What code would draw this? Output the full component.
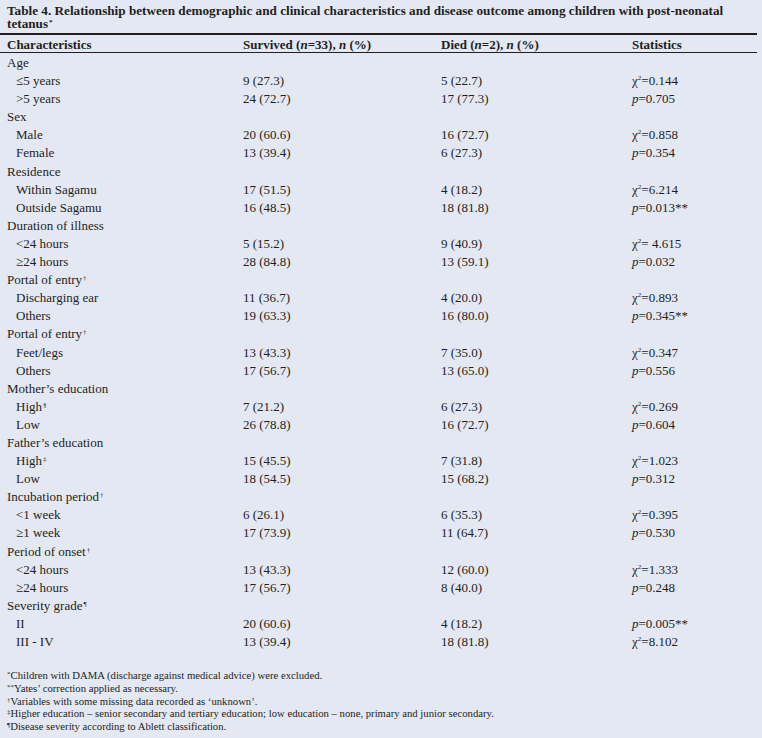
import React from "react";

type Row =
  | { kind: "head"; label: React.ReactNode }
  | { kind: "item"; label: React.ReactNode; s: string; d: string; stat: React.ReactNode };

const Chi = ({ v }: { v: string }) => (
  <span>
    χ<span className="text-[7px] leading-[0] relative -top-[5px]">2</span>={v}
  </span>
);
const P = ({ v }: { v: string }) => (
  <span>
    <i>p</i>={v}
  </span>
);
const M = ({ c }: { c: string }) => (
  <span className="text-[7px] leading-[0] relative -top-[4px] ml-[1px]">{c}</span>
);
const F = ({ c }: { c: string }) => (
  <span className="text-[7px] leading-[0] relative -top-[3px]">{c}</span>
);

const rows: Row[] = [
  { kind: "head", label: "Age" },
  { kind: "item", label: "≤5 years", s: "9 (27.3)", d: "5 (22.7)", stat: <Chi v="0.144" /> },
  { kind: "item", label: ">5 years", s: "24 (72.7)", d: "17 (77.3)", stat: <P v="0.705" /> },
  { kind: "head", label: "Sex" },
  { kind: "item", label: "Male", s: "20 (60.6)", d: "16 (72.7)", stat: <Chi v="0.858" /> },
  { kind: "item", label: "Female", s: "13 (39.4)", d: "6 (27.3)", stat: <P v="0.354" /> },
  { kind: "head", label: "Residence" },
  { kind: "item", label: "Within Sagamu", s: "17 (51.5)", d: "4 (18.2)", stat: <Chi v="6.214" /> },
  { kind: "item", label: "Outside Sagamu", s: "16 (48.5)", d: "18 (81.8)", stat: <P v="0.013**" /> },
  { kind: "head", label: "Duration of illness" },
  { kind: "item", label: "<24 hours", s: "5 (15.2)", d: "9 (40.9)", stat: <Chi v=" 4.615" /> },
  { kind: "item", label: "≥24 hours", s: "28 (84.8)", d: "13 (59.1)", stat: <P v="0.032" /> },
  { kind: "head", label: <>Portal of entry<M c="†" /></> },
  { kind: "item", label: "Discharging ear", s: "11 (36.7)", d: "4 (20.0)", stat: <Chi v="0.893" /> },
  { kind: "item", label: "Others", s: "19 (63.3)", d: "16 (80.0)", stat: <P v="0.345**" /> },
  { kind: "head", label: <>Portal of entry<M c="†" /></> },
  { kind: "item", label: "Feet/legs", s: "13 (43.3)", d: "7 (35.0)", stat: <Chi v="0.347" /> },
  { kind: "item", label: "Others", s: "17 (56.7)", d: "13 (65.0)", stat: <P v="0.556" /> },
  { kind: "head", label: "Mother’s education" },
  { kind: "item", label: <>High<M c="§" /></>, s: "7 (21.2)", d: "6 (27.3)", stat: <Chi v="0.269" /> },
  { kind: "item", label: "Low", s: "26 (78.8)", d: "16 (72.7)", stat: <P v="0.604" /> },
  { kind: "head", label: "Father’s education" },
  { kind: "item", label: <>High<M c="‡" /></>, s: "15 (45.5)", d: "7 (31.8)", stat: <Chi v="1.023" /> },
  { kind: "item", label: "Low", s: "18 (54.5)", d: "15 (68.2)", stat: <P v="0.312" /> },
  { kind: "head", label: <>Incubation period<M c="†" /></> },
  { kind: "item", label: "<1 week", s: "6 (26.1)", d: "6 (35.3)", stat: <Chi v="0.395" /> },
  { kind: "item", label: "≥1 week", s: "17 (73.9)", d: "11 (64.7)", stat: <P v="0.530" /> },
  { kind: "head", label: <>Period of onset<M c="†" /></> },
  { kind: "item", label: "<24 hours", s: "13 (43.3)", d: "12 (60.0)", stat: <Chi v="1.333" /> },
  { kind: "item", label: "≥24 hours", s: "17 (56.7)", d: "8 (40.0)", stat: <P v="0.248" /> },
  { kind: "head", label: <>Severity grade<M c="¶" /></> },
  { kind: "item", label: "II", s: "20 (60.6)", d: "4 (18.2)", stat: <P v="0.005**" /> },
  { kind: "item", label: "III - IV", s: "13 (39.4)", d: "18 (81.8)", stat: <Chi v="8.102" /> },
];

const cols = "grid grid-cols-[236px_198px_191px_1fr] items-center";

export default function App() {
  return (
    <div
      className="w-[762px] h-[738px] bg-[#e4e8f3] text-[#231f20] overflow-hidden"
      style={{ fontFamily: '"Liberation Serif", "Times New Roman", serif' }}
    >
      <div className="w-[757px]">
        <div className="pl-[7px] pt-[5px] pr-[1px] font-bold text-[13.2px] leading-[12.5px]">
          Table 4. Relationship between demographic and clinical characteristics and disease outcome among children with post-neonatal tetanus<M c="*" />
        </div>
        <div className="mt-[3px] h-[2px] bg-[#231f20]" />
        <div className={`${cols} h-[17px] pl-[7px] text-[13px] font-bold`}>
          <div>Characteristics</div>
          <div>
            Survived (<i>n</i>=33), <i>n</i> (%)
          </div>
          <div>
            Died (<i>n</i>=2), <i>n</i> (%)
          </div>
          <div>Statistics</div>
        </div>
        <div className="h-[1px] bg-[#231f20]" />
        <div className="text-[13px]">
          {rows.map((r, i) =>
            r.kind === "head" ? (
              <div key={i} className={`${cols} h-[18.1px] pl-[7px]`}>
                <div className="col-span-4">{r.label}</div>
              </div>
            ) : (
              <div key={i} className={`${cols} h-[18.1px] pl-[7px]`}>
                <div className="pl-[9px]">{r.label}</div>
                <div>{r.s}</div>
                <div>{r.d}</div>
                <div>{r.stat}</div>
              </div>
            )
          )}
        </div>
        <div className="pl-[7px] mt-[19px] text-[10.7px] leading-[12.75px]">
          <div><F c="*" />Children with DAMA (discharge against medical advice) were excluded.</div>
          <div><F c="**" />Yates’ correction applied as necessary.</div>
          <div><F c="†" />Variables with some missing data recorded as ‘unknown’.</div>
          <div><F c="‡" />Higher education – senior secondary and tertiary education; low education – none, primary and junior secondary.</div>
          <div><F c="¶" />Disease severity according to Ablett classification.</div>
        </div>
      </div>
    </div>
  );
}
